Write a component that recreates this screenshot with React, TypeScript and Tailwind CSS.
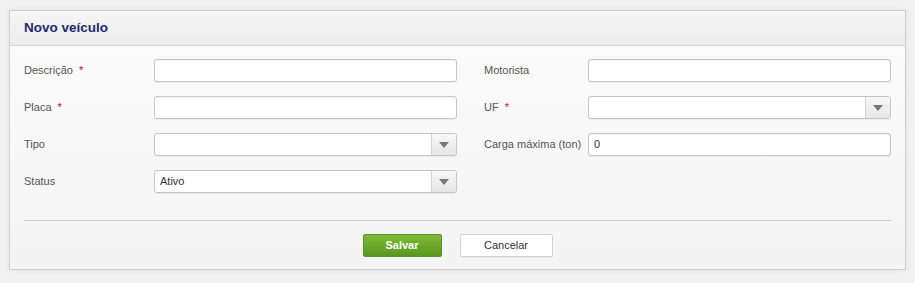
import type { ReactNode } from 'react'

function Field({ label, required, children, labelWidth }: { label: string; required?: boolean; children: ReactNode; labelWidth: string }) {
  return (
    <div className="flex items-center">
      <label className={`${labelWidth} shrink-0 whitespace-nowrap text-[11px] text-[#555555]`}>
        {label}
        {required && <span className="ml-[6px] text-[#cc0033]">*</span>}
      </label>
      {children}
    </div>
  )
}

function TextInput({ value = '' }: { value?: string }) {
  return (
    <div className="flex h-[23px] w-[303px] items-center rounded-[3px] border border-[#c6c6c6] bg-white px-[5px] text-[11px] text-[#333333] shadow-[inset_0_1px_1px_rgba(0,0,0,0.06),0_1px_1px_rgba(0,0,0,0.06)]">
      {value}
    </div>
  )
}

function Select({ value = '' }: { value?: string }) {
  return (
    <div className="flex h-[23px] w-[303px] items-stretch overflow-hidden rounded-[3px] border border-[#c6c6c6] bg-white text-[11px] text-[#333333] shadow-[0_1px_1px_rgba(0,0,0,0.06)]">
      <div className="flex flex-1 items-center px-[5px]">{value}</div>
      <div className="flex w-[25px] items-center justify-center border-l border-[#d4d4d4] bg-gradient-to-b from-[#f7f7f7] to-[#e6e6e6]">
        <div className="h-0 w-0 border-x-[5px] border-t-[6px] border-x-transparent border-t-[#777777]" />
      </div>
    </div>
  )
}

export default function App() {
  return (
    <div className="h-[283px] w-[915px] bg-[#f1f1f1] pl-[9px] pt-[10px] font-['Liberation_Sans',Arial,sans-serif]">
      <div className="w-[897px] border border-[#cfcfcf] bg-[#f6f6f6] shadow-[0_0_6px_rgba(0,0,0,0.06)]">
        <div className="flex h-[35px] items-center border-b border-[#d6d6d6] bg-gradient-to-b from-[#f6f6f6] to-[#ececec] pl-[14px]">
          <h2 className="text-[13.5px] font-bold text-[#1f2a6e]">Novo veículo</h2>
        </div>

        <div className="bg-gradient-to-b from-[#fbfbfb] to-[#f4f4f4] px-[14px] pb-[12px] pt-[13px]">
          <div className="flex">
            <div className="flex w-[433px] flex-col gap-[14px]">
              <Field label="Descrição" required labelWidth="w-[130px]">
                <TextInput />
              </Field>
              <Field label="Placa" required labelWidth="w-[130px]">
                <TextInput />
              </Field>
              <Field label="Tipo" labelWidth="w-[130px]">
                <Select />
              </Field>
              <Field label="Status" labelWidth="w-[130px]">
                <Select value="Ativo" />
              </Field>
            </div>
            <div className="ml-[27px] flex w-[407px] flex-col gap-[14px]">
              <Field label="Motorista" labelWidth="w-[104px]">
                <TextInput />
              </Field>
              <Field label="UF" required labelWidth="w-[104px]">
                <Select />
              </Field>
              <Field label="Carga máxima (ton)" labelWidth="w-[104px]">
                <TextInput value="0" />
              </Field>
            </div>
          </div>

          <div className="mt-[27px] border-t border-[#cccccc]" />

          <div className="mt-[13px] flex justify-center gap-[18px]">
            <button className="h-[23px] w-[79px] rounded-[2px] border border-[#55922a] bg-gradient-to-b from-[#7fbb33] to-[#5a9722] text-[11px] font-bold text-white">
              Salvar
            </button>
            <button className="h-[23px] w-[93px] rounded-[2px] border border-[#d3d3d3] bg-white text-[11px] text-[#333333] shadow-[0_1px_1px_rgba(0,0,0,0.05)]">
              Cancelar
            </button>
          </div>
        </div>
      </div>
    </div>
  )
}
